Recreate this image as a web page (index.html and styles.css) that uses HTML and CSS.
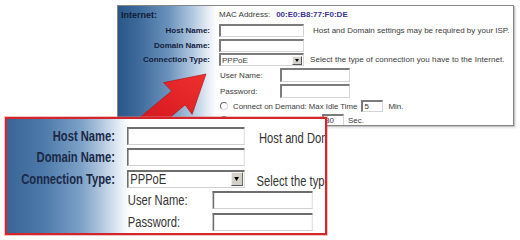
FILE: index.html
```html
<!DOCTYPE html>
<html>
<head>
<meta charset="utf-8">
<link rel="stylesheet" href="styles.css">
</head>
<body>
<div class="stage">
  <section class="panel">
    <div class="lbl lbl-title">Internet:</div>
    <div class="val"><span>MAC Address:</span><b class="mac">00:E0:B8:77:F0:DE</b></div>

    <div class="lbl">Host Name:</div>
    <div class="val"><span class="tin"></span><span class="note">Host and Domain settings may be required by your ISP.</span></div>

    <div class="lbl">Domain Name:</div>
    <div class="val"><span class="tin"></span></div>

    <div class="lbl">Connection Type:</div>
    <div class="val"><span class="tsel"><span class="tsel-text">PPPoE</span><span class="tsel-btn"></span></span><span class="note note2">Select the type of connection you have to the Internet.</span></div>

    <div></div>
    <div class="val"><span class="sub">User Name:</span><span class="tin tin-sm"></span></div>

    <div></div>
    <div class="val"><span class="sub">Password:</span><span class="tin tin-sm"></span></div>

    <div></div>
    <div class="val"><span class="radio"></span><span class="rtext">Connect on Demand: Max Idle Time</span><span class="tin tin-num">5</span><span class="unit">Min.</span></div>

    <div></div>
    <div class="val"><span class="radio"></span><span class="rtext rtext-keep">Keep Alive: Redial Period</span><span class="tin tin-num tin-num2">30</span><span class="unit unit2">Sec.</span></div>
  </section>

  <svg class="arrow" width="520" height="240" viewBox="0 0 520 240">
    <defs>
      <linearGradient id="ag" x1="0" y1="1" x2="1" y2="0">
        <stop offset="0" stop-color="#b3121a"/>
        <stop offset="0.6" stop-color="#dc1f24"/>
        <stop offset="1" stop-color="#f0302e"/>
      </linearGradient>
    </defs>
    <polygon points="206,74 163.5,82.6 171.5,91.1 101.2,149.7 114.8,163.5 185.1,104.9 192.1,114.4" fill="url(#ag)" stroke="#a8101a" stroke-width="0.6" stroke-linejoin="round"/>
  </svg>

  <section class="callout">
    <div class="zoom">
      <div class="zl">Host Name:</div>
      <div class="zv"><span class="zin"></span><span class="znote">Host and Domain settings may be required by your ISP.</span></div>

      <div class="zl">Domain Name:</div>
      <div class="zv"><span class="zin"></span></div>

      <div class="zl">Connection Type:</div>
      <div class="zv"><span class="zsel"><span class="zsel-text">PPPoE</span><span class="zsel-btn"></span></span><span class="znote znote2">Select the type of connection you have to the Internet.</span></div>

      <div></div>
      <div class="zv"><span class="zsub">User Name:</span><span class="zin zin-sm"></span></div>

      <div></div>
      <div class="zv"><span class="zsub">Password:</span><span class="zin zin-sm"></span></div>
    </div>
  </section>
</div>
</body>
</html>
```

FILE: styles.css
```css
* { box-sizing: border-box; }

body {
  margin: 0;
  background: #fff;
  font-family: "Liberation Sans", Arial, sans-serif;
}

.stage {
  position: relative;
  width: 520px;
  height: 240px;
  overflow: hidden;
  padding: 5px 0 0 117px;
}

/* ---------- top screenshot panel ---------- */
.panel {
  width: 397px;
  height: 121px;
  border: 1px solid #868686;
  box-shadow: 1px 1px 0 #c4c4c4, 2px 2px 2px rgba(0,0,0,0.12);
  background: linear-gradient(90deg, #2b5788 0, #3f6c9d 22px, #6a91bb 50px, #a9c2dc 72px, #dfe8f2 88px, #fff 99px);
  display: grid;
  grid-template-columns: 92px 1fr;
  column-gap: 9px;
  grid-template-rows: 17px 15px 14px 15px 16px 16px 14px 14px;
  font-size: 8px;
  color: #3a3a3a;
  overflow: hidden;
}

.lbl {
  display: flex;
  align-items: center;
  justify-content: flex-end;
  font-weight: bold;
  color: #14213d;
  white-space: nowrap;
}

.lbl-title {
  justify-content: flex-start;
  padding-left: 3px;
  font-size: 9px;
  color: #101c36;
}

.val {
  display: flex;
  align-items: center;
  white-space: nowrap;
}

.mac {
  margin-left: 6px;
  color: #3b3492;
}

.tin {
  display: inline-block;
  width: 85px;
  height: 13px;
  background: #fff;
  border-style: solid;
  border-width: 2px 1px 1px 2px;
  border-color: #7c7c7c #d6d6d6 #d6d6d6 #7c7c7c;
  font-size: 8px;
  line-height: 9px;
  padding-left: 1px;
  color: #333;
}

.tin-sm {
  width: 70px;
  height: 14px;
}

.tin-num {
  width: 22px;
  height: 12px;
  margin-left: 4px;
}

.note {
  margin-left: 9px;
}
.note2 {
  margin-left: 6px;
  letter-spacing: 0.06px;
}

.sub {
  width: 61px;
  padding-left: 1px;
}

.tsel {
  display: inline-flex;
  justify-content: space-between;
  align-items: center;
  width: 85px;
  height: 13px;
  background: #fff;
  border-style: solid;
  border-width: 2px 1px 1px 2px;
  border-color: #7c7c7c #d6d6d6 #d6d6d6 #7c7c7c;
  padding-left: 1px;
}

.tsel-btn {
  position: relative;
  width: 10px;
  height: 9px;
  margin-right: 1px;
  background: #d4d0c8;
  border: 1px solid;
  border-color: #f4f4f4 #555 #555 #f4f4f4;
}

.tsel-btn::after {
  content: "";
  position: absolute;
  left: 2px;
  top: 2px;
  border-left: 2px solid transparent;
  border-right: 2px solid transparent;
  border-top: 3px solid #000;
}

.radio {
  display: inline-block;
  width: 8px;
  height: 8px;
  margin-left: 1px;
  border-radius: 50%;
  border: 1px solid;
  border-color: #6c6c6c #dadada #dadada #6c6c6c;
  background: #fff;
}

.rtext {
  margin-left: 5px;
  font-size: 7.8px;
}
.rtext-keep { width: 87px; }

.unit { margin-left: 5px; }
.tin-num2 { margin-left: 2px; }
.unit2 { margin-left: 4px; }

/* ---------- arrow ---------- */
.arrow {
  position: absolute;
  left: 0;
  top: 0;
  pointer-events: none;
}

/* ---------- magnified callout ---------- */
.callout {
  position: absolute;
  left: 5px;
  top: 117px;
  width: 322px;
  height: 118px;
  border: 2px solid #d3262c;
  box-shadow: 0 0 0 1px rgba(226, 120, 120, 0.45);
  background: linear-gradient(90deg, #3a6697 0, #4b78a8 35px, #7ea2c8 75px, #c6d6e8 102px, #f2f6fa 117px, #fff 124px);
  overflow: hidden;
}

.zoom {
  width: 398px;
  height: 114px;
  transform: scaleX(0.8);
  transform-origin: 0 0;
  padding-top: 6px;
  display: grid;
  grid-template-columns: 135px 1fr;
  column-gap: 15px;
  grid-auto-rows: 21.5px;
  font-size: 14px;
  color: #333;
}

.zl {
  display: flex;
  align-items: center;
  justify-content: flex-end;
  font-weight: bold;
  color: #1b2947;
  white-space: nowrap;
}

.zv {
  display: flex;
  align-items: center;
  white-space: nowrap;
}

.zin {
  display: inline-block;
  width: 147px;
  height: 18px;
  background: #fff;
  border-style: solid;
  border-width: 2px 1px 1px 2px;
  border-color: #6e6e6e #d0d0d0 #d0d0d0 #6e6e6e;
}

.zin-sm { width: 125px; }

.znote {
  margin-left: 18px;
  padding-top: 4px;
}

.znote2 { margin-left: 15px; }

.zsub {
  width: 107px;
  padding-left: 1px;
}

.zsel {
  display: inline-flex;
  justify-content: space-between;
  align-items: center;
  width: 147px;
  height: 18px;
  background: #fff;
  border-style: solid;
  border-width: 2px 1px 1px 2px;
  border-color: #6e6e6e #d0d0d0 #d0d0d0 #6e6e6e;
  padding-left: 2px;
}

.zsel-btn {
  position: relative;
  width: 15px;
  height: 14px;
  margin-right: 1px;
  background: #d4d0c8;
  border: 1px solid;
  border-color: #f6f6f6 #555 #555 #f6f6f6;
}

.zsel-btn::after {
  content: "";
  position: absolute;
  left: 3px;
  top: 4px;
  border-left: 3.5px solid transparent;
  border-right: 3.5px solid transparent;
  border-top: 4px solid #000;
}
```
